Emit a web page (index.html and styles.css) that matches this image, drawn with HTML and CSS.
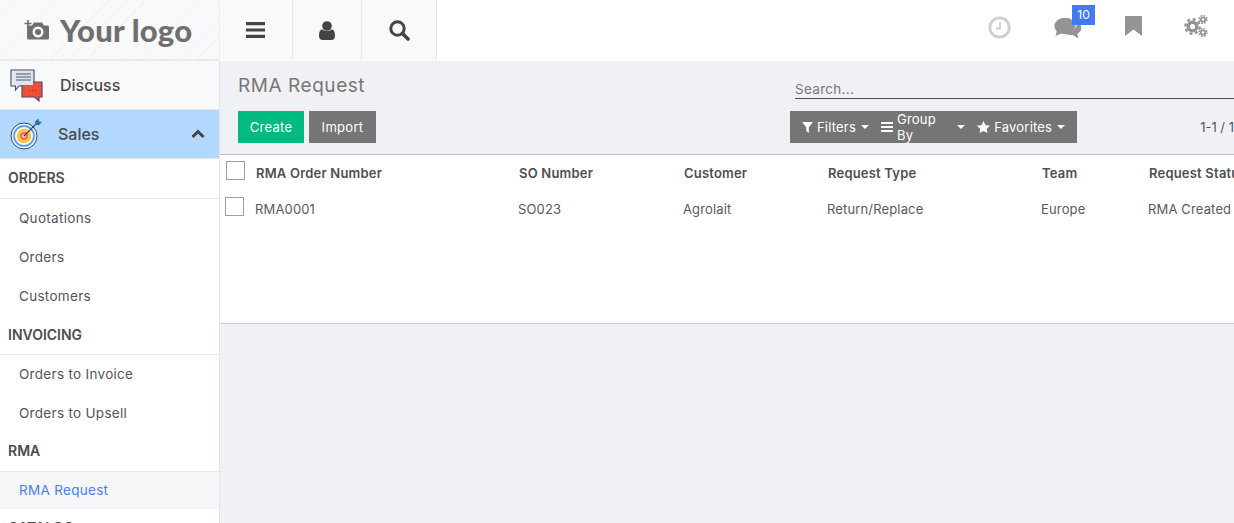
FILE: index.html
```html
<!DOCTYPE html>
<html lang="en">
<head>
<meta charset="utf-8">
<title>RMA Request</title>
<link rel="stylesheet" href="styles.css">
</head>
<body>
<header class="topbar">
  <div class="brand">
    <svg class="brand-icon" width="26" height="24" viewBox="0 0 26 24"><path d="M4 2v7M0.5 5.5h7" stroke="#6f6f6f" stroke-width="1.6" fill="none"/><path d="M4 8.5h3.5l2-3h8l2 3h3.500a1.500 1.500 0 0 1 1.500 1.500v11a1.500 1.500 0 0 1-1.500 1.500h-19a1.500 1.500 0 0 1-1.500-1.500v-11a1.500 1.500 0 0 1 1.500-1.500z" fill="#6f6f6f" transform="translate(0.5 -1)"/><circle cx="14" cy="14" r="5.500" fill="#f8f9fb"/><circle cx="14" cy="14" r="3" fill="#6f6f6f"/></svg>
    <span class="brand-text">Your logo</span>
  </div>
  <nav class="quick">
    <a class="quick-btn w72"><svg width="20" height="18" viewBox="0 0 20 18"><path d="M0 1h19v3.200H0zM0 7.400h19v3.200H0zM0 13.800h19V17H0z" fill="#444"/></svg></a>
    <a class="quick-btn w69"><svg width="16" height="19" viewBox="0 0 16 19"><circle cx="8" cy="5" r="4.800" fill="#444"/><path d="M0 15c0-5 1.500-6.500 3.500-6.500 1.200 1 2.800 1.500 4.500 1.500s3.300-.5 4.500-1.500c2 0 3.500 1.500 3.500 6.500 0 2.500-1.500 4-3.500 4h-9C1.500 19 0 17.500 0 15z" fill="#444"/></svg></a>
    <a class="quick-btn w75"><svg width="21" height="21" viewBox="0 0 21 21"><circle cx="8.500" cy="8.500" r="6.700" fill="none" stroke="#444" stroke-width="3"/><path d="M13.500 13.500l5.500 5.500" stroke="#444" stroke-width="3.600" stroke-linecap="round"/></svg></a>
  </nav>
  <div class="systray">
    <span class="tray-item t-clock"><svg width="23" height="23" viewBox="0 0 23 23"><circle cx="11.500" cy="11.500" r="9.700" fill="none" stroke="#cfcfcf" stroke-width="2.800"/><path d="M12 6v6.500H8" fill="none" stroke="#cfcfcf" stroke-width="1.800"/></svg></span>
    <span class="tray-item t-chat"><svg width="28" height="23" viewBox="0 0 28 23"><ellipse cx="11" cy="9" rx="10.700" ry="8.200" fill="#949494"/><path d="M3 13l-1.500 6 7-3z" fill="#949494"/><path d="M23 4.500c3 1.700 4.500 4 4.300 6.500-.2 2.600-1.700 4.500-4 5.800l1.200 4.700-5.500-3.500c-3 .3-6-.2-8-1.500 6.500-.2 13-4.500 12-12z" fill="#949494"/></svg><b class="badge">10</b></span>
    <span class="tray-item t-mark"><svg width="17" height="20" viewBox="0 0 17 20"><path d="M0 1q0-1 1-1h15q1 0 1 1v19l-8.500-6.500L0 20z" fill="#949494"/></svg></span>
    <span class="tray-item t-cog"><svg width="24" height="22" viewBox="0 0 24 22"><g fill="none" stroke="#949494"><circle cx="8.500" cy="11.500" r="4.300" stroke-width="3.400"/><circle cx="8.500" cy="11.500" r="7.200" stroke-width="2.400" stroke-dasharray="3 2.650"/><circle cx="19" cy="4.500" r="2.200" stroke-width="1.800"/><circle cx="19" cy="4.500" r="3.900" stroke-width="1.400" stroke-dasharray="1.800 1.270"/><circle cx="19" cy="17.500" r="2.200" stroke-width="1.800"/><circle cx="19" cy="17.500" r="3.900" stroke-width="1.400" stroke-dasharray="1.800 1.270"/></g></svg></span>
  </div>
</header>

<div class="shell">
  <aside class="sidebar">
    <a class="app">
      <svg class="app-icon" width="34" height="33" viewBox="0 0 34 33"><path d="M1 1h23v16H9l-3.500 4v-4H1z" fill="#e8ebf0" stroke="#3d4a6b" stroke-width="1.100"/><path d="M5 5h15M5 8h15M5 11h15" stroke="#8b93a8" stroke-width="1.400"/><path d="M12 13h20v15h-3v4l-4.500-4H12z" fill="#f04e37" stroke="#3d4a6b" stroke-width="1.100"/><path d="M4 2h19v14H4z" fill="#dfe3ea"/><path d="M6 5h15M6 8h15M6 11h15" stroke="#7f88a0" stroke-width="1.400"/><path d="M19 21.500h1.200M22 21.500h1.200M25 21.500h1.200" stroke="#8a3a30" stroke-width="1"/></svg>
      <span>Discuss</span>
    </a>
    <a class="app active">
      <svg class="app-icon" width="32" height="32" viewBox="0 0 32 32"><circle cx="14" cy="18" r="13" fill="#fff" stroke="#2e3f63" stroke-width="1"/><circle cx="14" cy="18" r="11" fill="#5aa5e8"/><circle cx="14" cy="18" r="9" fill="#fff"/><circle cx="14" cy="18" r="7.500" fill="#fbc84e"/><circle cx="14" cy="18" r="4" fill="#f26d5b"/><circle cx="14" cy="18" r="1.600" fill="#fbe3c8"/><path d="M14 18L27 5" stroke="#2e3f63" stroke-width="1.100"/><path d="M25 7l.5-4 3-2.500.5 3 3 .5-3 3z" fill="#2f6fb3"/></svg>
      <span>Sales</span>
      <svg class="chev" width="14" height="10" viewBox="0 0 14 10"><path d="M1.500 8L7 2.500 12.500 8" fill="none" stroke="#444" stroke-width="3"/></svg>
    </a>
    <h4 class="group">ORDERS</h4>
    <a class="item">Quotations</a>
    <a class="item">Orders</a>
    <a class="item">Customers</a>
    <h4 class="group">INVOICING</h4>
    <a class="item">Orders to Invoice</a>
    <a class="item">Orders to Upsell</a>
    <h4 class="group group-rma">RMA</h4>
    <a class="item current">RMA Request</a>
    <h4 class="group">CATALOG</h4>
  </aside>

  <main class="main">
    <section class="panel">
      <div class="panel-left">
        <h1 class="title">RMA Request</h1>
        <div class="buttons">
          <button class="btn btn-create">Create</button>
          <button class="btn btn-import">Import</button>
        </div>
      </div>
      <div class="panel-right">
        <div class="search">Search...</div>
        <div class="tools">
          <div class="filters">
            <span class="fbtn"><svg width="11" height="11" viewBox="0 0 11 11"><path d="M0 0h11L6.800 5.200V11L4.200 9V5.200z" fill="#fff"/></svg>Filters<i class="caret"></i></span>
            <span class="fbtn"><svg width="12" height="10" viewBox="0 0 12 10"><path d="M0 0h12v2H0zM0 4h12v2H0zM0 8h12v2H0z" fill="#fff"/></svg>Group By<i class="caret"></i></span>
            <span class="fbtn"><svg width="13" height="12" viewBox="0 0 13 12"><path d="M6.500 0l2 4.100 4.500.6-3.300 3.200.8 4.100-4-2.100-4 2.100.8-4.100L0 4.700l4.500-.6z" fill="#fff"/></svg>Favorites<i class="caret"></i></span>
          </div>
          <span class="pager">1-1 / 1</span>
        </div>
      </div>
    </section>
    <section class="list">
      <div class="row head">
        <span class="check"></span>
        <span class="c1">RMA Order Number</span><span class="c2">SO Number</span><span class="c3">Customer</span><span class="c4">Request Type</span><span class="c5">Team</span><span class="c6">Request Status</span>
      </div>
      <div class="row data">
        <span class="check"></span>
        <span class="c1">RMA0001</span><span class="c2">SO023</span><span class="c3">Agrolait</span><span class="c4">Return/Replace</span><span class="c5">Europe</span><span class="c6">RMA Created</span>
      </div>
    </section>
  </main>
</div>
</body>
</html>
```

FILE: styles.css
```css
* { box-sizing: border-box; }
html, body { margin: 0; height: 523px; overflow: hidden; }
body { width: 1234px; font-family: "Inter", "Open Sans", sans-serif; font-size: 13px; color: #555; background: #f0f1f5; }
a { display: block; }
svg { display: block; flex: none; }

.topbar { display: flex; height: 61px; background: #fff; }
.brand { width: 220px; height: 61px; background: repeating-linear-gradient(135deg, #f8f9fb 0 12px, #f2f3f5 12px 13px) 0 0; background-color: #f8f9fb; display: flex; align-items: center; padding-left: 24px; border-right: 1px solid #eceef1; border-bottom: 2px solid #e9eaec; }
.brand-icon { margin-right: 10px; }
.brand-text { font-family: "Lato", sans-serif; font-weight: 900; font-size: 31px; color: #6f6f6f; letter-spacing: .2px; }
.quick { display: flex; }
.quick-btn { display: flex; align-items: center; justify-content: center; height: 60px; background: #f8f9fb; border-right: 1px solid #e6e8ec; }
.w72 { width: 73px; }
.w69 { width: 69px; }
.w75 { width: 75px; }
.systray { flex: 1; display: flex; justify-content: flex-end; position: relative; }
.tray-item { position: absolute; display: block; }
.t-clock { left: 551px; top: 16px; }
.t-chat { left: 617px; top: 17px; }
.t-mark { left: 688px; top: 16px; }
.t-cog { left: 747px; top: 15px; }
.badge { position: absolute; left: 18px; top: -12px; width: 23px; height: 20px; background: #4479f6; color: #fff; font-weight: 400; font-size: 12px; line-height: 20px; text-align: center; }

.shell { display: flex; height: 462px; }
.sidebar { width: 220px; flex: none; background: #fff; border-right: 1px solid #e3e4e8; overflow: hidden; }
.app { display: flex; align-items: center; height: 49px; background: #f8f9fb; font-size: 16px; font-weight: 500; color: #4a4a4a; padding-left: 10px; border-bottom: 1px solid #e3e4e8; }
.app span { margin-left: 16px; }
.app.active { background: #b2d8ff; }
.chev { margin-left: auto; margin-right: 14px; }
.group { margin: 0; height: 40px; line-height: 38px; padding-left: 8px; font-size: 14px; font-weight: 600; color: #4c4c4c; border-bottom: 1px solid #e6e7ea; }
.group-rma { height: 39px; line-height: 36px; }
.group:last-child { border: 0; height: 20px; line-height: 38px; }
.item { height: 39px; line-height: 38px; padding-left: 19px; font-size: 13.500px; color: #555; letter-spacing: .3px; }
.item + .group { height: 39px; }
.current { color: #4d7cf5; background: #f6f7f9; height: 37px; line-height: 37px; }

.main { flex: 1; min-width: 0; overflow: hidden; }
.panel { display: flex; height: 94px; border-bottom: 1px solid #b9bccf; padding-left: 18px; background: #f0f1f5; }
.panel-left { width: 552px; flex: none; }
.title { margin: 0; padding-top: 12px; height: 50px; font-size: 19px; line-height: 26px; font-weight: 400; color: #777; letter-spacing: .55px; }
.buttons { display: flex; gap: 5px; }
.btn { height: 32px; border: 0; padding: 0; color: #fff; font: 400 13px "Inter", sans-serif; letter-spacing: .3px; }
.btn-create { width: 66px; background: #00ba81; }
.btn-import { width: 67px; background: #757575; }
.panel-right { flex: 1; min-width: 0; }
.search { margin: 18px 0 0 5px; height: 20px; line-height: 20px; border-bottom: 1px solid #4a4a4a; color: #777; font-size: 13.500px; letter-spacing: .3px; }
.tools { display: flex; margin-top: 12px; }
.filters { display: flex; width: 316px; height: 32px; align-items: center; background: #757575; color: #fff; padding-left: 12px; }
.fbtn { display: flex; align-items: center; gap: 4px; margin-right: 12px; font-size: 13px; letter-spacing: .2px; }
.caret { width: 0; height: 0; margin-left: 1px; border: 4px solid transparent; border-top-color: #fff; border-bottom: 0; }
.pager { margin-left: 123px; line-height: 32px; color: #555; white-space: nowrap; }

.list { height: 169px; background: #fff; border-bottom: 1px solid #cfcfcf; }
.row { position: relative; display: grid; grid-template-columns: 263px 165px 144px 214px 107px 200px; white-space: nowrap; width: 1100px; align-items: center; }
.head { height: 36px; padding-left: 36px; margin-left: 0; font-weight: 600; font-size: 13px; color: #4f4f4f; letter-spacing: .2px; }
.data { height: 36px; padding-left: 35px; font-size: 13px; color: #5a5a5a; letter-spacing: .15px; }
.check { position: absolute; width: 19px; height: 19px; border: 1px solid #9c9fa8; background: #fff; top: 6px; left: 6px; }
.data .check { left: 5px; top: 6px; }
```
